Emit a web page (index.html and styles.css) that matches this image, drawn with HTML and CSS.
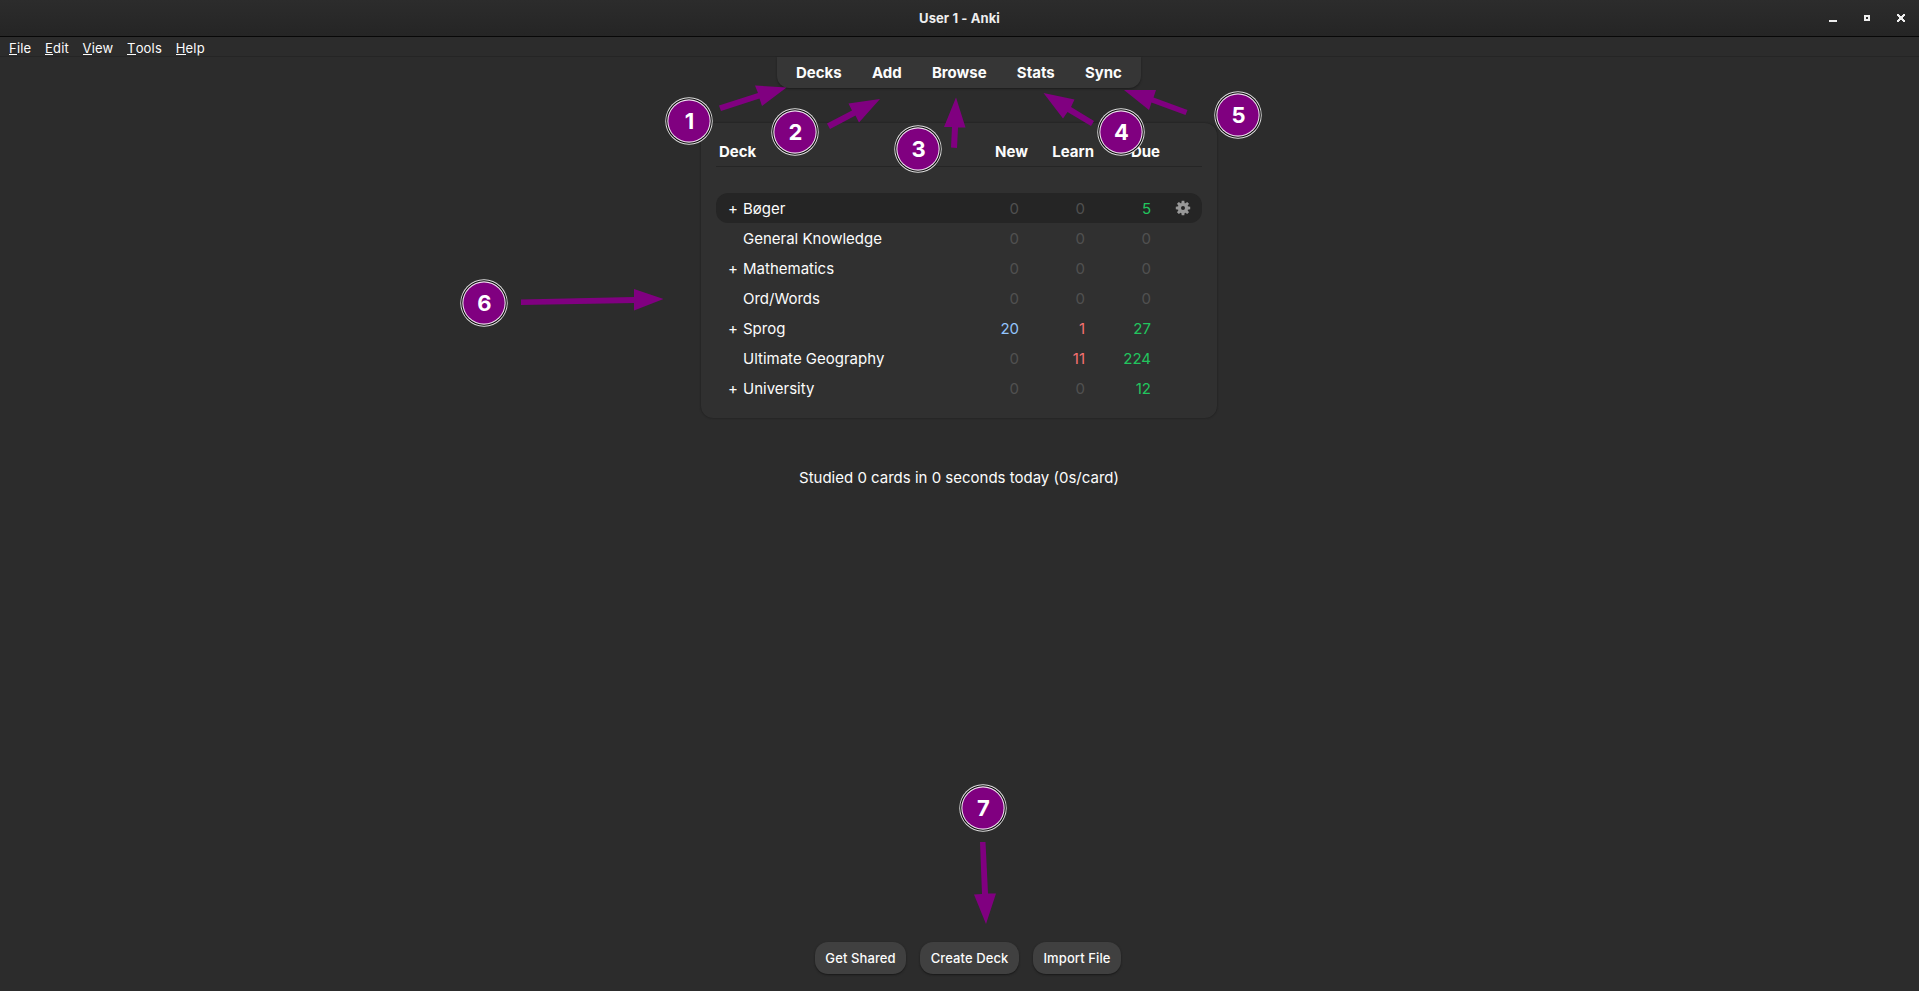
FILE: index.html
```html
<!DOCTYPE html>
<html lang="en">
<head>
<meta charset="utf-8">
<title>User 1 - Anki</title>
<link rel="stylesheet" href="styles.css">
</head>
<body>
<header class="titlebar">
  <span class="title">User 1 - Anki</span>
  <svg class="winbtns" width="80" height="12" viewBox="0 0 80 12" shape-rendering="crispEdges">
    <path fill="#eee" d="M0 7h8v2h-8z"/>
    <path fill="#eee" fill-rule="evenodd" d="M35 2h6v6h-6zM37 4v2h2v-2z"/>
    <path fill="#eee" d="M68 1h2v1h1v1h2v-1h1v-1h2v2h-1v1h-1v2h1v1h1v2h-2v-1h-1v-1h-2v1h-1v1h-2v-2h1v-1h1v-2h-1v-1h-1z"/>
  </svg>
</header>
<nav class="menubar"><span><u>F</u>ile</span><span><u>E</u>dit</span><span><u>V</u>iew</span><span><u>T</u>ools</span><span><u>H</u>elp</span></nav>
<main class="main">
  <nav class="toolbar"><a>Decks</a><a>Add</a><a>Browse</a><a>Stats</a><a>Sync</a></nav>
  <section class="card">
    <div class="row head"><b>Deck</b><b>New</b><b>Learn</b><b>Due</b></div>
    <div class="row current"><span>+</span><span class="name">Bøger</span><i>0</i><i>0</i><i class="due">5</i>
      <svg class="gear" width="16" height="16" viewBox="-8 -8 16 16"><g fill="#999"><path fill-rule="evenodd" d="M0-5.2A5.2 5.2 0 1 1 0 5.2A5.2 5.2 0 1 1 0-5.2zM0-2A2 2 0 1 0 0 2A2 2 0 1 0 0-2z"/><g id="t"><path id="p" d="M-1.7-4.5L-1.3-7.2H1.3L1.7-4.5z"/><use href="#p" transform="rotate(45)"/><use href="#p" transform="rotate(90)"/><use href="#p" transform="rotate(135)"/></g><use href="#t" transform="rotate(180)"/></g></svg></div>
    <div class="row"><span></span><span class="name">General Knowledge</span><i>0</i><i>0</i><i>0</i></div>
    <div class="row"><span>+</span><span class="name">Mathematics</span><i>0</i><i>0</i><i>0</i></div>
    <div class="row"><span></span><span class="name">Ord/Words</span><i>0</i><i>0</i><i>0</i></div>
    <div class="row"><span>+</span><span class="name">Sprog</span><i class="new">20</i><i class="learn">1</i><i class="due">27</i></div>
    <div class="row"><span></span><span class="name">Ultimate Geography</span><i>0</i><i class="learn">11</i><i class="due">224</i></div>
    <div class="row"><span>+</span><span class="name">University</span><i>0</i><i>0</i><i class="due">12</i></div>
  </section>
  <p class="studied">Studied 0 cards in 0 seconds today (0s/card)</p>
</main>
<footer class="footer"><button class="b1">Get Shared</button><button class="b2">Create Deck</button><button class="b3">Import File</button></footer>
<svg class="notes" width="1919" height="991" viewBox="0 0 1919 991">
  <defs>
    <g id="disc"><circle r="23.7" fill="#e4e4e4"/><circle r="22.8" fill="#080808"/><circle r="21.7" fill="#f0e4f0"/><circle r="20.6" fill="#800080"/></g>
  </defs>
  <g fill="#800080">
    <path d="M719 105.500L758 93L755 85.500L786.500 87.500L762 106L759.500 98.500L721 111z"/>
    <path d="M827 123.500L852 110.500L848.500 103.500L880 99L859 122.500L855.500 115.500L830 129z"/>
    <path d="M951 147.500L952 127H944L956 97.500L965.500 127.500H958L957 148z"/>
    <path d="M1043.500 93L1074.500 99.500L1071 107L1094 121L1091 126L1067.500 112L1063 118.500z"/>
    <path d="M1124 90L1156 90L1153.500 97.500L1187.500 110L1185.500 115L1151.500 102.500L1149 110z"/>
    <path d="M521 299.500L634 297V289L663.500 299L634 310.500V303L521 305z"/>
    <path d="M980 842H985.500L988 893.500L996 893.500L986 924L974 894.500L982 894z"/>
  </g>
  <g class="nums">
    <g transform="translate(689 121)"><use href="#disc"/><text x=".5" y="8">1</text></g>
    <g transform="translate(795 132)"><use href="#disc"/><text x=".5" y="8">2</text></g>
    <g transform="translate(918 149)"><use href="#disc"/><text x=".5" y="8">3</text></g>
    <g transform="translate(1121 132)"><use href="#disc"/><text x=".5" y="8">4</text></g>
    <g transform="translate(1238 115)"><use href="#disc"/><text x=".5" y="8">5</text></g>
    <g transform="translate(484 303)"><use href="#disc"/><text x=".5" y="8">6</text></g>
    <g transform="translate(983 808)"><use href="#disc"/><text x=".5" y="8">7</text></g>
  </g>
</svg>
</body>
</html>
```
FILE: styles.css
```css
* { box-sizing: border-box; }
body { margin: 0; height: 991px; display: flex; flex-direction: column; position: relative; overflow: hidden; background: #2c2c2c; color: #fcfcfc; font: 15px/30px Inter, sans-serif; }
.titlebar { height: 37px; flex: none; display: grid; grid-template-columns: 1fr auto 1fr; background: linear-gradient(#2c2c2c, #252525); border-bottom: 1px solid #080808; }
.title { grid-column: 2; font-size: 13px; font-weight: 700; line-height: 36px; letter-spacing: .1px; color: #eee; }
.winbtns { justify-self: end; margin: 13px 10px 0 0; }
.menubar { height: 20px; flex: none; display: flex; gap: 13.6px; padding-left: 9px; font-size: 13px; line-height: 22px; letter-spacing: .2px; border-bottom: 1px solid #252525; }
.menubar u { text-decoration: none; display: inline-block; height: 18px; border-bottom: 1px solid #fcfcfc; }
.main { flex: 1; display: flex; flex-direction: column; align-items: center; padding-right: 1px; }
.toolbar { width: 364px; height: 31px; display: flex; justify-content: space-between; padding: 0 19px; font-weight: 700; line-height: 32px; background: #363636; border-radius: 0 0 12px 12px; box-shadow: 0 1px 2px #1c1c1c; }
.card { width: 516px; height: 295px; margin-top: 35px; padding: 13px 15px; background: #303030; border-radius: 12px; box-shadow: 0 0 2px #181818; }
.row { height: 30px; display: grid; grid-template-columns: 15px 213px 63px 66px 66px 1fr; padding: 1px 0 0 12px; border-radius: 12px; }
.head { height: 31px; grid-template-columns: 243px 66px 66px 66px; padding-left: 3px; margin-bottom: 26px; border-bottom: 1px solid #252525; border-radius: 0; }
.head b + b { text-align: right; }
.row i { font-style: normal; text-align: right; color: #505050; }
.row .new { color: #93c5fd; }
.row .learn { color: #f87171; }
.row .due { color: #22c55e; }
.current { background: #252525; }
.gear { margin: 6px 0 0 23.5px; }
.studied { margin: 45px 0 0; }
.footer { display: flex; gap: 14px; padding: 0 0 17px 815px; }
button { height: 32px; padding: 0; border: 0; border-radius: 13px; background: #404040; color: #fcfcfc; font: 500 13px Inter, sans-serif; letter-spacing: .1px; box-shadow: 0 1px 2px #181818; }
.b1 { width: 91px; } .b2 { width: 99px; } .b3 { width: 88px; }
.notes { position: absolute; left: 0; top: 0; }
.nums text { fill: #fff; font: 700 22px Inter, sans-serif; text-anchor: middle; }
```
